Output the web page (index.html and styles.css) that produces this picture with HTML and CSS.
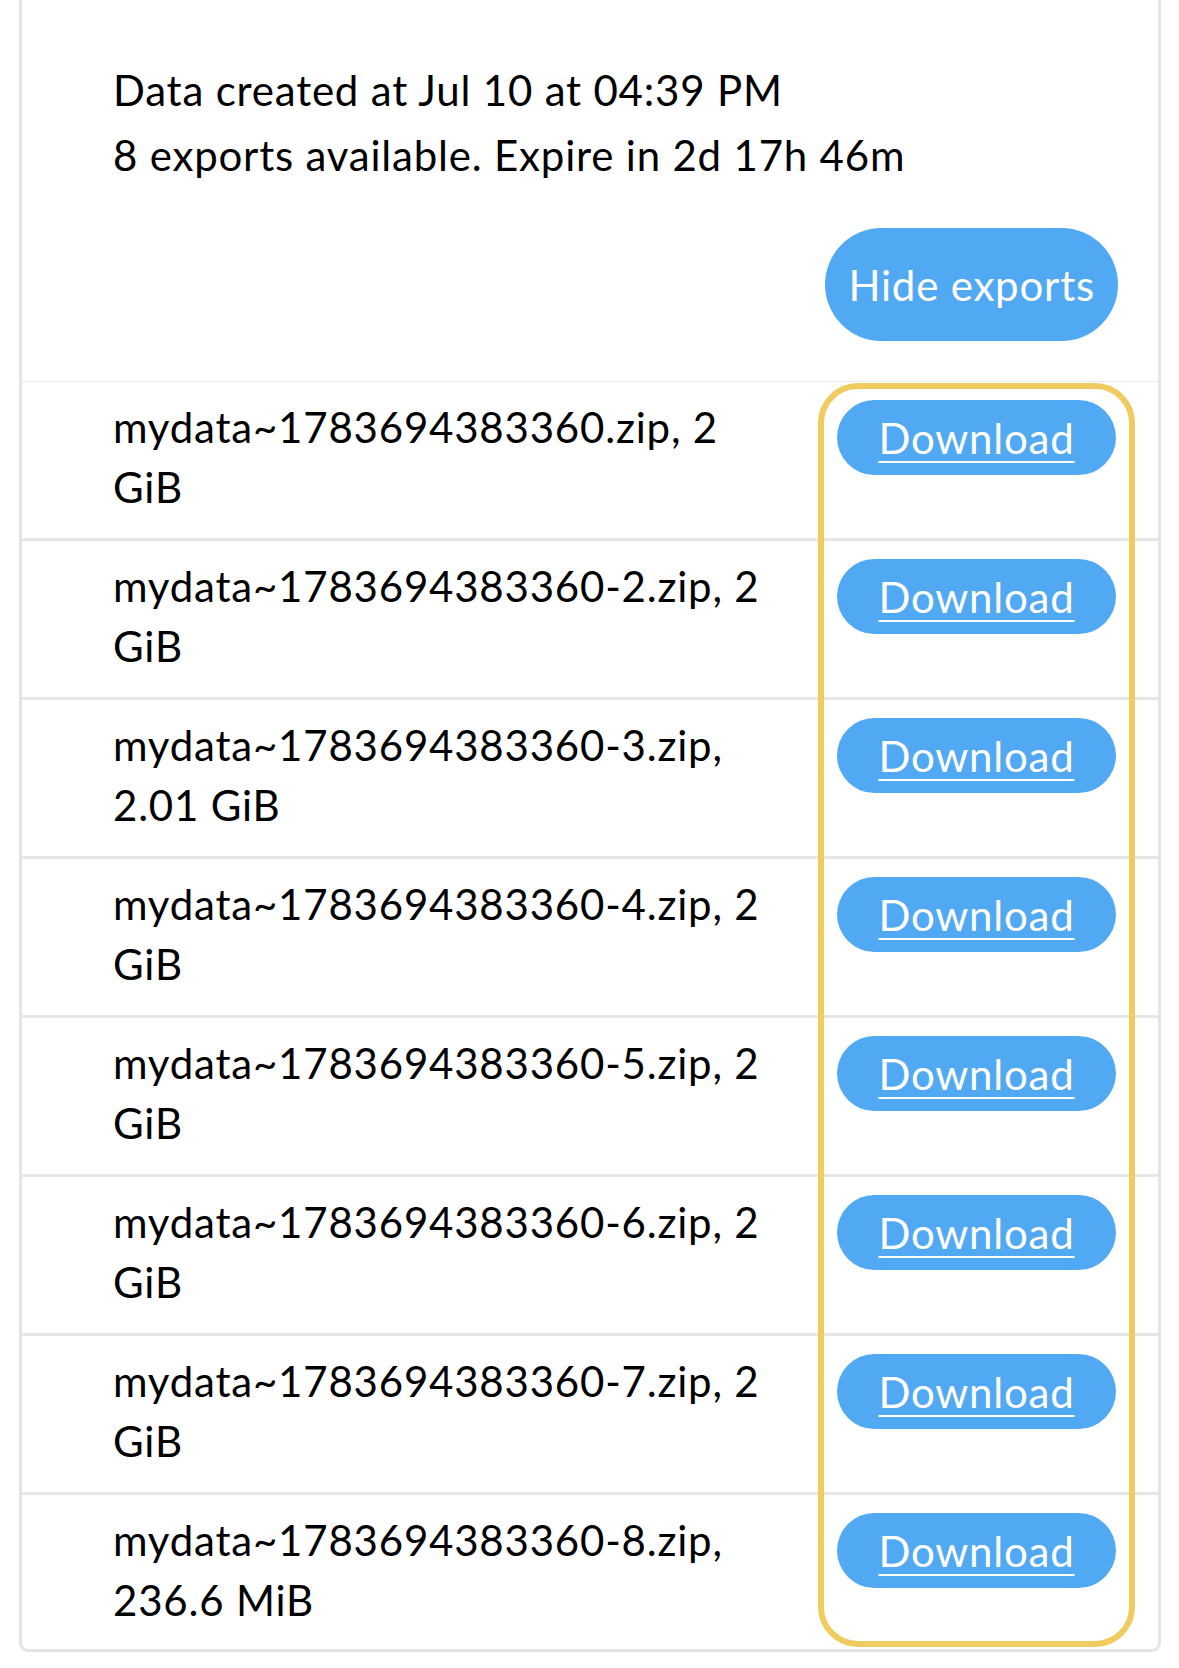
FILE: index.html
```html
<!DOCTYPE html>
<html lang="en">
<head>
<meta charset="utf-8">
<title>Exports</title>
<link rel="stylesheet" href="styles.css">
</head>
<body>
<div class="card">
  <div class="header">
    <p class="info">Data created at Jul 10 at 04:39 PM</p>
    <p class="info second">8 exports available. Expire in 2d 17h 46m</p>
    <div class="header-actions">
      <button class="pill hide-btn">Hide exports</button>
    </div>
  </div>
  <div class="list">
    <div class="row">
      <div class="name">mydata~1783694383360.zip, 2 GiB</div>
      <div class="action"><a class="pill dl-btn" href="#">Download</a></div>
    </div>
    <div class="row">
      <div class="name">mydata~1783694383360-2.zip, 2 GiB</div>
      <div class="action"><a class="pill dl-btn" href="#">Download</a></div>
    </div>
    <div class="row">
      <div class="name">mydata~1783694383360-3.zip, 2.01 GiB</div>
      <div class="action"><a class="pill dl-btn" href="#">Download</a></div>
    </div>
    <div class="row">
      <div class="name">mydata~1783694383360-4.zip, 2 GiB</div>
      <div class="action"><a class="pill dl-btn" href="#">Download</a></div>
    </div>
    <div class="row">
      <div class="name">mydata~1783694383360-5.zip, 2 GiB</div>
      <div class="action"><a class="pill dl-btn" href="#">Download</a></div>
    </div>
    <div class="row">
      <div class="name">mydata~1783694383360-6.zip, 2 GiB</div>
      <div class="action"><a class="pill dl-btn" href="#">Download</a></div>
    </div>
    <div class="row">
      <div class="name">mydata~1783694383360-7.zip, 2 GiB</div>
      <div class="action"><a class="pill dl-btn" href="#">Download</a></div>
    </div>
    <div class="row last">
      <div class="name">mydata~1783694383360-8.zip, 236.6 MiB</div>
      <div class="action"><a class="pill dl-btn" href="#">Download</a></div>
    </div>
    <div class="highlight"></div>
  </div>
</div>
</body>
</html>
```

FILE: styles.css
```css
* { box-sizing: border-box; }

html, body {
  margin: 0;
  padding: 0;
  background: #ffffff;
}

body {
  font-family: "Lato", "Noto Sans", sans-serif;
  font-size: 42px;
  line-height: 50px;
  letter-spacing: 0.8px;
  color: #000000;
}

.card {
  margin-left: 19px;
  width: 1142px;
  border: 3px solid #e4e4e4;
  border-top: none;
  border-radius: 0 0 9px 9px;
  background: #ffffff;
}

.header {
  padding: 65px 40px 40px 91px;
  border-bottom: 1px solid #e8e8e8;
}

.info {
  margin: 0;
}

.info.second {
  margin-top: 15px;
}

.header-actions {
  display: flex;
  justify-content: flex-end;
  margin-top: 48px;
}

.pill {
  display: inline-flex;
  align-items: center;
  justify-content: center;
  background: #51a9f4;
  color: #ffffff;
  font-family: inherit;
  font-size: 42px;
  letter-spacing: 0.8px;
  border: none;
}

.hide-btn {
  height: 113px;
  padding: 0 23px;
  border-radius: 57px;
}

.list {
  position: relative;
}

.row {
  display: flex;
  align-items: flex-start;
  padding: 15px 42px 21px 91px;
  border-bottom: 3px solid #e6e6e6;
  line-height: 60px;
}

.row.last {
  border-bottom: none;
  padding-bottom: 19px;
}

.name {
  flex: 1;
  padding-right: 57px;
}

.action {
  width: 279px;
  margin-top: 3px;
}

.dl-btn {
  width: 279px;
  height: 75px;
  border-radius: 38px;
  text-decoration: underline;
  text-decoration-thickness: 2px;
  text-underline-offset: 7px;
}

.highlight {
  position: absolute;
  left: 796px;
  top: 1px;
  bottom: 2px;
  width: 317px;
  border: 6px solid #f0cb5f;
  border-radius: 40px;
  pointer-events: none;
}
```
